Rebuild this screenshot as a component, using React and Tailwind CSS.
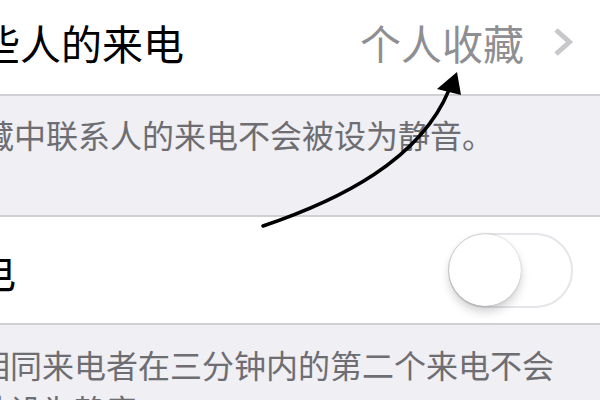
const cjk = "font-['Noto_Sans_CJK_SC','Noto_Sans',sans-serif]"

function Chevron() {
  return (
    <svg width="20" height="30" viewBox="0 0 20 30" className="shrink-0">
      <path d="M3 3 L16.5 15 L3 27" fill="none" stroke="#c7c7cc" strokeWidth="5" strokeLinecap="butt" strokeLinejoin="miter" />
    </svg>
  )
}

function Toggle() {
  return (
    <div className="w-[125px] h-[75px] rounded-full border-2 border-[#e5e5ea] bg-white flex items-center shrink-0">
      <div className="w-[72px] h-[72px] rounded-full bg-white -ml-[1px] shadow-[0_6px_10px_rgba(0,0,0,0.18),0_0_2px_rgba(0,0,0,0.25)]" />
    </div>
  )
}

export default function App() {
  return (
    <div className={`relative w-[600px] h-[400px] overflow-hidden bg-[#efeff4] ${cjk}`}>
      {/* row: allowed calls */}
      <div className="h-[96px] bg-white border-b-2 border-[#d0cfd4] flex items-center justify-between pr-[27px]">
        <span className="-ml-[21px] -mt-[10px] text-[41px] leading-[48px] text-black whitespace-nowrap">些人的来电</span>
        <div className="flex items-center gap-[29px] -mt-[10px]">
          <span className="text-[41px] leading-[48px] text-[#8e8e93] whitespace-nowrap">个人收藏</span>
          <Chevron />
        </div>
      </div>

      <div className="h-[119px] pt-[18px]">
        <p className="-ml-[18px] text-[32px] leading-[40px] text-[#6d6d72] whitespace-nowrap">藏中联系人的来电不会被设为静音。</p>
      </div>

      {/* row: repeated calls */}
      <div className="h-[110px] bg-white border-y-2 border-[#d0cfd4] flex items-center justify-between pr-[27px]">
        <span className="-ml-[25px] text-[41px] leading-[48px] text-black whitespace-nowrap">电</span>
        <Toggle />
      </div>

      <div className="pt-[19px]">
        <p className="-ml-[22px] text-[32px] leading-[40px] text-[#6d6d72] whitespace-nowrap">相同来电者在三分钟内的第二个来电不会</p>
        <p className="-ml-[22px] mt-[5px] text-[32px] leading-[40px] text-[#6d6d72] whitespace-nowrap">被设为静音。</p>
      </div>

      {/* annotation arrow drawn over the screenshot */}
      <svg className="absolute inset-0 pointer-events-none" width="600" height="400" viewBox="0 0 600 400">
        <path d="M263 226 C340 200 420 160 449 90" fill="none" stroke="#000" strokeWidth="3.5" strokeLinecap="round" />
        <polygon points="457,72 437,89 461,95" fill="#000" />
      </svg>
    </div>
  )
}
